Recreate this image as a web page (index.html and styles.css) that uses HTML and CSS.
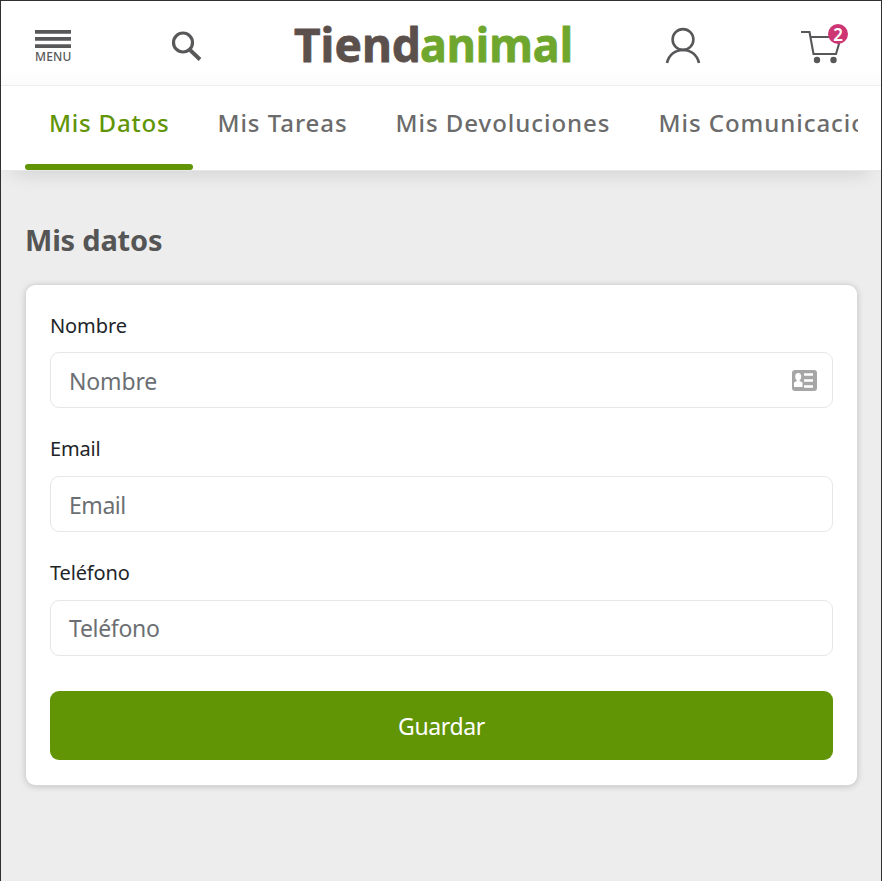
FILE: index.html
```html
<!DOCTYPE html>
<html lang="es">
<head>
<meta charset="utf-8">
<title>Mis datos - Tiendanimal</title>
<link rel="stylesheet" href="styles.css">
</head>
<body>
<div class="page">
  <header class="topbar">
    <button class="menu" type="button">
      <svg width="36" height="18" viewBox="0 0 36 18"><path d="M0 0h36v3.7H0zM0 7h36v3.7H0zM0 14.2h36v3.7H0z" fill="#58585a"/></svg>
      <span class="menu-label">MENU</span>
    </button>
    <svg class="search" width="32" height="32" viewBox="0 0 32 32" fill="none" stroke="#58585a"><circle cx="12" cy="11.500" r="9.5" stroke-width="3.2"/><path d="M18.500 18.500l10.500 10" stroke-width="3.800"/></svg>
    <svg class="logo" width="284" height="50" viewBox="0 0 284 50" role="img" aria-label="Tiendanimal">
      <text class="logo-text logo-brown" x="2" y="42" textLength="127" lengthAdjust="spacingAndGlyphs">Tiend</text>
      <text class="logo-text logo-green" x="128" y="42" textLength="153" lengthAdjust="spacingAndGlyphs">animal</text>
    </svg>
    <svg class="user" width="36" height="38" viewBox="0 0 36 38" fill="none" stroke="#58585a" stroke-width="2.6"><circle cx="18" cy="12.5" r="10.4"/><path d="M2 36C4 27.500 10.500 23 18 23s14 4.500 16 13"/></svg>
    <div class="cart">
      <svg width="42" height="40" viewBox="0 0 42 40"><path d="M0 8h8.500l4 22h22.500l5-17H9.500" fill="none" stroke="#58585a" stroke-width="2.1"/><circle cx="16" cy="36" r="3.200" fill="#58585a"/><circle cx="32.500" cy="36" r="3.200" fill="#58585a"/></svg>
      <span class="badge">2</span>
    </div>
  </header>
  <nav class="tabs">
    <div class="tabs-scroll">
      <a class="tab active">Mis Datos</a>
      <a class="tab">Mis Tareas</a>
      <a class="tab">Mis Devoluciones</a>
      <a class="tab">Mis Comunicaciones</a>
    </div>
  </nav>
  <main class="content">
    <h1 class="title">Mis datos</h1>
    <form class="card">
      <label class="label label-name">Nombre</label>
      <div class="field"><span class="hint hint-name">Nombre</span>
        <svg width="25" height="21" viewBox="0 0 25 21"><rect width="25" height="21" rx="3" fill="#a6a6a6"/><path d="M12 4.500h9M12 10.500h9M12 16.500h9" stroke="#fff" stroke-width="2.400"/><ellipse cx="6.200" cy="6.700" rx="3" ry="3.600" fill="#fff"/><path d="M4.800 9h2.800v2l2.900 1.500V17H2v-4.500L4.800 11z" fill="#fff"/></svg>
      </div>
      <label class="label label-email">Email</label>
      <div class="field"><span class="hint hint-email">Email</span></div>
      <label class="label label-phone">Teléfono</label>
      <div class="field"><span class="hint hint-phone">Teléfono</span></div>
      <button class="save" type="button">Guardar</button>
    </form>
  </main>
</div>
</body>
</html>
```
FILE: styles.css
```css
* { box-sizing: border-box; }
body { margin: 0; font-family: "Noto Sans", "Open Sans", sans-serif; }
button { border: 0; padding: 0; font-family: inherit; }
svg { display: block; flex: none; }
.page { height: 881px; overflow: hidden; background: #ededed; border: 1px solid #303033; border-bottom: 0; }
.topbar { height: 85px; display: flex; align-items: flex-start; background: linear-gradient(#fff 68px, #fbfbfb); border-bottom: 1px solid #eee; padding-left: 34px; }
.menu { margin-top: 29px; width: 36px; background: none; }
.menu-label { display: block; padding-top: 1px; font-size: 12px; line-height: 16px; font-weight: 500; letter-spacing: .2px; color: #58585a; }
.search { margin: 30px 0 0 100px; }
.logo { margin: 19px 0 0 89px; overflow: visible; }
.logo-text { font-size: 47px; font-weight: 700; stroke-width: .8px; stroke-linejoin: round; }
.logo-brown { fill: #5c504d; stroke: #5c504d; }
.logo-green { fill: #6fa72e; stroke: #6fa72e; }
.user { margin: 26px 0 0 89px; }
.cart { position: relative; margin: 23px 0 0 100px; }
.badge { position: absolute; left: 27px; top: 0; width: 20px; height: 20px; border-radius: 50%; background: #cd3673; color: #fff; font-size: 17px; line-height: 21px; font-weight: 600; text-align: center; }
.tabs { position: relative; height: 85px; padding: 0 23px 0 24px; background: #fff; border-bottom: 1px solid #e8e8e8; box-shadow: 0 14px 20px -12px rgba(0,0,0,.13); }
.tabs-scroll { display: flex; overflow: hidden; height: 84px; }
.tab { flex: none; height: 84px; padding: 19px 24px 0; font-size: 24px; line-height: 36px; font-weight: 500; letter-spacing: .96px; color: #6b6b6b; white-space: nowrap; }
.active { letter-spacing: .8px; color: #619506; display: flex; flex-direction: column; justify-content: space-between; }
.active::after { content: ""; height: 6px; margin: 0 -24px; border-radius: 3px; background: #619506; }
.content { padding: 49px 24px 0 25px; }
.title { margin: 0 0 0 -1px; height: 65px; font-size: 29px; line-height: 40px; font-weight: 700; letter-spacing: -.2px; color: #555; }
.card { height: 500px; padding: 24px; background: #fff; border-radius: 9px; box-shadow: 0 0 0 1px #d8d8d8, 0 1px 7px rgba(0,0,0,.22); }
.label { display: block; height: 43px; font-size: 20px; line-height: 33px; letter-spacing: -.1px; color: #212529; }
.label-email, .label-phone { line-height: 31px; letter-spacing: -.15px; }
.field { height: 56px; margin-bottom: 25px; padding: 0 15px 0 18px; display: flex; align-items: center; justify-content: space-between; border: 1px solid #e5e7ea; border-radius: 9px; }
.hint { font-size: 23px; color: #6b6f73; line-height: 34px; }
.hint-name { padding-top: 2px; letter-spacing: -.15px; }
.hint-email { padding-top: 2px; letter-spacing: -.45px; }
.hint-phone { letter-spacing: -.3px; }
.save { display: block; width: 100%; height: 69px; margin-top: 35px; border-radius: 9px; background: #619506; color: #fff; font-size: 23px; letter-spacing: -.35px; }
```
